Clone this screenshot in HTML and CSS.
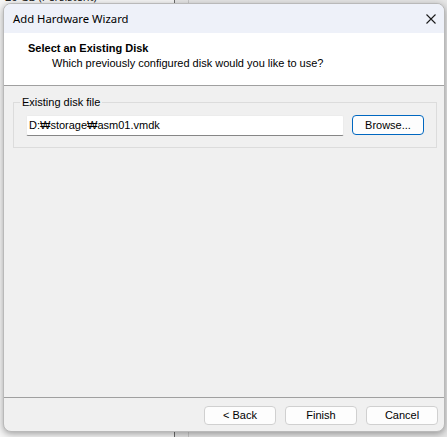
FILE: index.html
```html
<!DOCTYPE html>
<html>
<head>
<meta charset="utf-8">
<link rel="stylesheet" href="styles.css">
</head>
<body>
<div class="desktop">
  <div class="bg-left"><span class="bg-text">20 GB (Persistent)</span></div>
  <div class="bg-line l1"></div>
  <div class="bg-line l2"></div>
  <div class="window">
    <div class="titlebar">
      <span class="title">Add Hardware Wizard</span>
      <svg class="close" width="10" height="10" viewBox="0 0 10 10"><path d="M0.5 0.5 L9.5 9.5 M9.5 0.5 L0.5 9.5" stroke="#1b1b1b" stroke-width="1.1" fill="none"/></svg>
    </div>
    <div class="header">
      <div class="h-title">Select an Existing Disk</div>
      <div class="h-sub">Which previously configured disk would you like to use?</div>
    </div>
    <div class="body">
      <fieldset class="group">
        <legend>Existing disk file</legend>
        <div class="row">
          <div class="input">D:₩storage₩asm01.vmdk</div>
          <div class="btn primary">Browse...</div>
        </div>
      </fieldset>
    </div>
    <div class="footer">
      <div class="btn">&lt; Back</div>
      <div class="btn">Finish</div>
      <div class="btn">Cancel</div>
    </div>
  </div>
</div>
</body>
</html>
```
FILE: styles.css
```css
html, body { margin: 0; padding: 0; }
body {
  font-family: "Liberation Sans", Arial, sans-serif;
  font-size: 11px;
  color: #000;
}
.desktop {
  position: relative;
  width: 447px;
  height: 437px;
  overflow: hidden;
  background: #e6e6e6;
}
.bg-left {
  position: absolute;
  left: 0; top: 0;
  width: 174px; height: 437px;
  background: #f5f5f5;
}
.bg-text {
  position: absolute;
  left: 5px; top: -10px;
  line-height: 14px;
  font-family: "Noto Sans", sans-serif;
  font-size: 11px;
  color: #222;
}
.bg-line { position: absolute; top: 0; height: 437px; width: 1px; }
.l1 { left: 174px; background: #6b6b6b; }
.l2 { left: 188px; background: #c8c8c8; }

.window {
  position: absolute;
  left: 3px; top: 3px;
  width: 440px; height: 427px;
  border: 1px solid #b9b9b9;
  border-radius: 8px;
  overflow: hidden;
  background: #f0f0f0;
  box-shadow: 0 2px 7px rgba(0,0,0,0.35);
  display: flex;
  flex-direction: column;
}
.titlebar {
  height: 29px;
  background: #eef1f9;
  display: flex;
  align-items: center;
  justify-content: space-between;
  padding: 0 8px 0 9px;
  flex: none;
}
.title {
  font-family: "Noto Sans", sans-serif;
  font-size: 11.3px;
  line-height: 15px;
}
.close { margin-top: 1px; }

.header {
  background: #fff;
  height: 53px;
  box-sizing: border-box;
  padding: 8px 0 0 24px;
  border-bottom: 1px solid #a0a0a0;
  line-height: 15px;
  flex: none;
}
.h-title { font-weight: bold; }
.h-sub { padding-left: 24px; }

.body {
  flex: 1;
  padding: 9px 7px 0 9px;
}
.group {
  margin: 0;
  padding: 5px 12px 11px 12px;
  border: 1px solid #dcdcdc;
}
.group legend {
  margin-left: -6px;
  padding: 0 2px;
  line-height: 15px;
}
.row {
  display: flex;
  align-items: flex-start;
  gap: 8px;
}
.input {
  flex: 1;
  height: 21px;
  box-sizing: border-box;
  background: #fff;
  border: 1px solid #ececec;
  border-bottom: 1px solid #868686;
  padding-left: 2px;
  line-height: 19px;
  border-radius: 2px;
}
.btn {
  width: 72px;
  height: 19px;
  box-sizing: border-box;
  border: 1px solid #d0d0d0;
  border-radius: 4px;
  background: #fdfdfd;
  text-align: center;
  line-height: 17px;
}
.btn.primary {
  height: 20px;
  border-color: #0067c0;
  line-height: 18px;
}
.footer {
  flex: none;
  height: 34px;
  box-sizing: border-box;
  border-top: 1px solid #a0a0a0;
  display: flex;
  justify-content: flex-end;
  gap: 9px;
  padding: 8px 6px 0 0;
}
```
